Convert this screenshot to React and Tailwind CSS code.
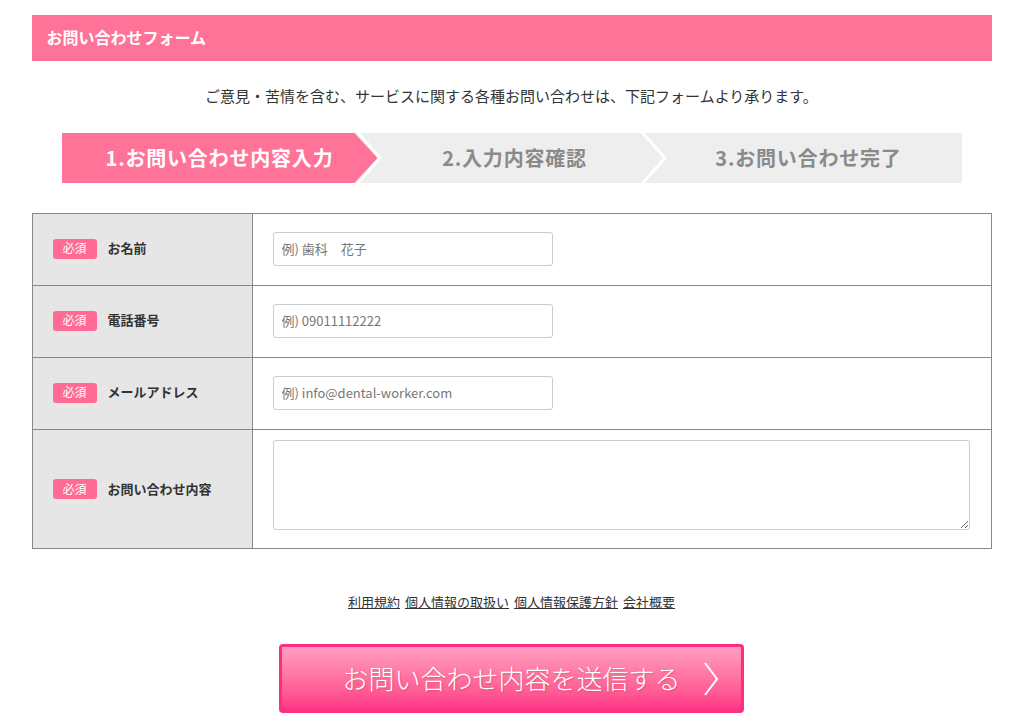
import React from 'react'

const jp = { fontFamily: '"Noto Sans CJK JP", "Noto Sans", sans-serif' }

const fields = [
    { label: 'お名前', placeholder: '例) 歯科　花子' },
    { label: '電話番号', placeholder: '例) 09011112222' },
    { label: 'メールアドレス', placeholder: '例) info@dental-worker.com' },
]

function Badge() {
    return (
        <span className="inline-flex items-center justify-center w-[44px] h-[20px] pb-[1px] rounded-[3px] bg-[#ff6b95] text-white text-[12px] leading-none">
            必須
        </span>
    )
}

function Steps() {
    return (
        <div className="relative mx-[30px] mt-[26px] h-[50px] flex bg-[#eeeeee] font-bold text-[20px] tracking-[0.04em]">
            <div className="w-[316px] flex items-center justify-center pb-[1px] text-white bg-[#ff7398] [clip-path:polygon(0_0,293px_0,100%_50%,293px_100%,0_100%)]">
                1.お問い合わせ内容入力
            </div>
            <div className="w-[287px] flex items-center justify-center pr-[13px] pb-[1px] text-[#8a8a8a]">
                2.入力内容確認
            </div>
            <div className="flex-1 flex items-center justify-center pr-[9px] pb-[1px] text-[#8a8a8a]">
                3.お問い合わせ完了
            </div>
            <svg className="absolute inset-0 pointer-events-none" width="900" height="50" viewBox="0 0 900 50">
                <polyline points="294.5,-2 318,25 294.5,52" fill="none" stroke="#fff" strokeWidth="3" />
                <polyline points="579,-2 603,25 579,52" fill="none" stroke="#fff" strokeWidth="3" />
            </svg>
        </div>
    )
}

export default function App() {
    return (
        <div className="min-h-screen bg-white text-[#333]" style={jp}>
            <div className="w-[960px] mx-auto pt-[15px] pb-[10px]">
                <div className="h-[46px] bg-[#ff7398] flex items-center pl-[15px] pb-[3px] text-white font-bold text-[16px]">
                    お問い合わせフォーム
                </div>

                <p className="mt-[25px] text-center text-[15px] leading-[20px] text-[#333]">
                    ご意見・苦情を含む、サービスに関する各種お問い合わせは、下記フォームより承ります。
                </p>

                <div className="pt-[1px]">
                    <Steps />
                </div>

                <div className="mt-[30px] border border-[#888]">
                    {fields.map((f) => (
                        <div key={f.label} className="flex h-[72px] border-b border-[#888]">
                            <div className="w-[220px] shrink-0 bg-[#e6e6e6] border-r border-[#888] flex items-center pl-[20px] pb-[2px] gap-[11px]">
                                <Badge />
                                <span className="font-bold text-[13px] leading-none pb-[2px] text-[#333]">{f.label}</span>
                            </div>
                            <div className="flex-1 flex items-center pl-[20px] pb-[1px]">
                                <input
                                    type="text"
                                    placeholder={f.placeholder}
                                    className="w-[280px] h-[34px] border border-[#ccc] rounded-[3px] px-[8px] pb-[2px] text-[13px] placeholder:text-[#777] outline-none"
                                    style={jp}
                                />
                            </div>
                        </div>
                    ))}
                    <div className="flex h-[118px]">
                        <div className="w-[220px] shrink-0 bg-[#e6e6e6] border-r border-[#888] flex items-center pl-[20px] gap-[11px]">
                            <Badge />
                            <span className="font-bold text-[13px] leading-none pb-[2px] text-[#333]">お問い合わせ内容</span>
                        </div>
                        <div className="flex-1 pl-[20px] pr-[21px] pt-[10px]">
                            <textarea className="block w-full h-[90px] border border-[#ccc] rounded-[3px] outline-none" />
                        </div>
                    </div>
                </div>

                <div className="mt-[44px] flex justify-center gap-[5px] text-[13px] leading-[18px] text-[#333]">
                    <a href="#" className="underline">利用規約</a>
                    <a href="#" className="underline">個人情報の取扱い</a>
                    <a href="#" className="underline">個人情報保護方針</a>
                    <a href="#" className="underline">会社概要</a>
                </div>

                <div className="mt-[33px] flex justify-center">
                    <button className="relative w-[465px] h-[69px] rounded-[4px] border-[3px] border-[#ff2d80] bg-gradient-to-b from-[#ff9dc0] to-[#ff3384] text-white text-[26px] font-light flex items-center justify-center pb-[2px] [text-shadow:1px_1px_2px_rgba(200,60,60,0.45)]">
                        お問い合わせ内容を送信する
                        <svg className="absolute right-[22px] top-1/2 -translate-y-1/2" width="16" height="34" viewBox="0 0 16 34">
                            <polyline points="2,1 14,17 2,33" fill="none" stroke="#fff" strokeWidth="2" />
                        </svg>
                    </button>
                </div>
            </div>
        </div>
    )
}
